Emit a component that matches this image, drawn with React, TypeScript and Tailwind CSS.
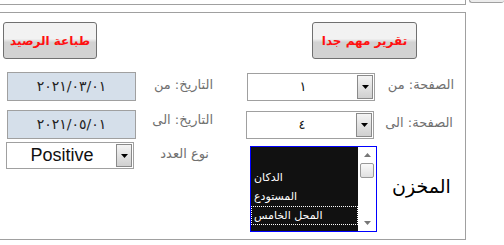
import React from "react";

const ar = { fontFamily: '"DejaVu Sans", "Noto Sans", sans-serif' };

function Arrow() {
  return (
    <div className="flex h-full w-[16px] items-center justify-center border border-[#8a8a8a] bg-gradient-to-b from-[#f4f4f4] to-[#d0d0d0]">
      <svg width="7" height="4" viewBox="0 0 7 4">
        <path d="M0 0h7L3.5 4z" fill="#000" />
      </svg>
    </div>
  );
}

function Select({ value, big }: { value: string; big?: boolean }) {
  return (
    <div className="flex h-full w-full items-stretch border border-[#a0a0a0] bg-white p-px">
      <div
        className={
          big
            ? "flex flex-1 items-center justify-center text-[18px] text-[#111]"
            : "flex flex-1 items-center justify-center text-[13px] text-[#111]"
        }
        style={big ? { fontFamily: '"Liberation Sans", Arial, sans-serif' } : ar}
      >
        {value}
      </div>
      <Arrow />
    </div>
  );
}

function Btn({ label, w }: { label: string; w: string }) {
  return (
    <button
      className={`${w} h-[37px] rounded-[3px] border border-[#707070] bg-gradient-to-b from-[#f2f2f2] from-45% to-[#d2d2d2] to-55% text-[12px] font-bold text-[#ff1010]`}
      style={ar}
    >
      {label}
    </button>
  );
}

function DateBox({ value }: { value: string }) {
  return (
    <div
      className="flex h-[29px] w-[129px] items-center justify-center border border-[#a0a0a0] bg-[#d5dfea] text-[14px] tracking-[2.5px] text-[#222]"
      style={ar}
    >
      {value}
    </div>
  );
}

function Label({ text, w }: { text: string; w: string }) {
  return (
    <div dir="rtl" className={`${w} text-right text-[13px] text-[#707070]`} style={ar}>
      {text}
    </div>
  );
}

export default function App() {
  return (
    <div className="relative h-[245px] w-[504px] overflow-hidden bg-white">
      {/* top strip */}
      <div className="flex h-[5px]">
        <div className="h-[5px] w-[466px] border-b border-r border-[#a0a0a0]" />
        <div className="ml-[3px] h-[3px] flex-1 rounded-b-[3px] border-b border-l border-[#a0a0a0] bg-[#ececec]" />
      </div>

      {/* panel */}
      <div className="mt-[7px] h-[228px] w-[466px] border-y border-r border-[#a0a0a0]">
        <div className="mt-[9px] flex">
          <div className="ml-[3px]">
            <Btn label="طباعة الرصيد" w="w-[94px]" />
          </div>
          <div className="ml-[215px]">
            <Btn label="تقرير مهم جدا" w="w-[105px]" />
          </div>
        </div>

        <div className="mt-[13px] flex h-[29px] items-center">
          <div className="ml-[7px]">
            <DateBox value="٢٠٢١/٠٣/٠١" />
          </div>
          <div className="ml-[8px] -mt-[4px]">
            <Label text="التاريخ: من" w="w-[69px]" />
          </div>
          <div className="ml-[34px] h-[28px] w-[128px]">
            <Select value="١" />
          </div>
          <div className="ml-[4px] -mt-[4px]">
            <Label text="الصفحة: من" w="w-[75px]" />
          </div>
        </div>

        <div className="mt-[9px] flex h-[29px] items-center">
          <div className="ml-[7px]">
            <DateBox value="٢٠٢١/٠٥/٠١" />
          </div>
          <div className="ml-[8px] -mt-[10px]">
            <Label text="التاريخ: الى" w="w-[69px]" />
          </div>
          <div className="ml-[33px] h-[28px] w-[128px]">
            <Select value="٤" />
          </div>
          <div className="ml-[4px] -mt-[4px]">
            <Label text="الصفحة: الى" w="w-[75px]" />
          </div>
        </div>

        <div className="mt-[3px] flex items-start">
          <div className="ml-[6px] h-[27px] w-[128px]">
            <Select value="Positive" big />
          </div>
          <div className="ml-[19px] mt-[2px]">
            <Label text="نوع العدد" w="w-[56px]" />
          </div>
          <div className="ml-[41px] mt-[4px] flex h-[86px] w-[127px] border border-[#0000ff] bg-[#111]">
            <div dir="rtl" className="flex flex-1 flex-col pt-[21px] text-[11px] text-white" style={ar}>
              <div className="h-[19px] pl-[3px] text-left leading-[19px]">الدكان</div>
              <div className="h-[19px] pl-[3px] text-left leading-[19px]">المستودع</div>
              <div className="h-[19px] border border-dotted border-white pl-[2px] text-left leading-[17px]">المحل الخامس</div>
            </div>
            <div className="flex w-[18px] flex-col items-center bg-white">
              <svg width="7" height="4" viewBox="0 0 7 4" className="mt-[6px]">
                <path d="M3.5 0L7 4H0z" fill="#777" />
              </svg>
              <div className="mt-[6px] h-[15px] w-[14px] rounded-[2px] border border-[#999] bg-gradient-to-b from-[#fafafa] to-[#e0e0e0]" />
              <div className="flex-1" />
              <svg width="7" height="4" viewBox="0 0 7 4" className="mb-[6px]">
                <path d="M0 0h7L3.5 4z" fill="#777" />
              </svg>
            </div>
          </div>
          <div dir="rtl" className="ml-[15px] mt-[30px] text-[19px] text-black" style={ar}>
            المخزن
          </div>
        </div>
      </div>
    </div>
  );
}
